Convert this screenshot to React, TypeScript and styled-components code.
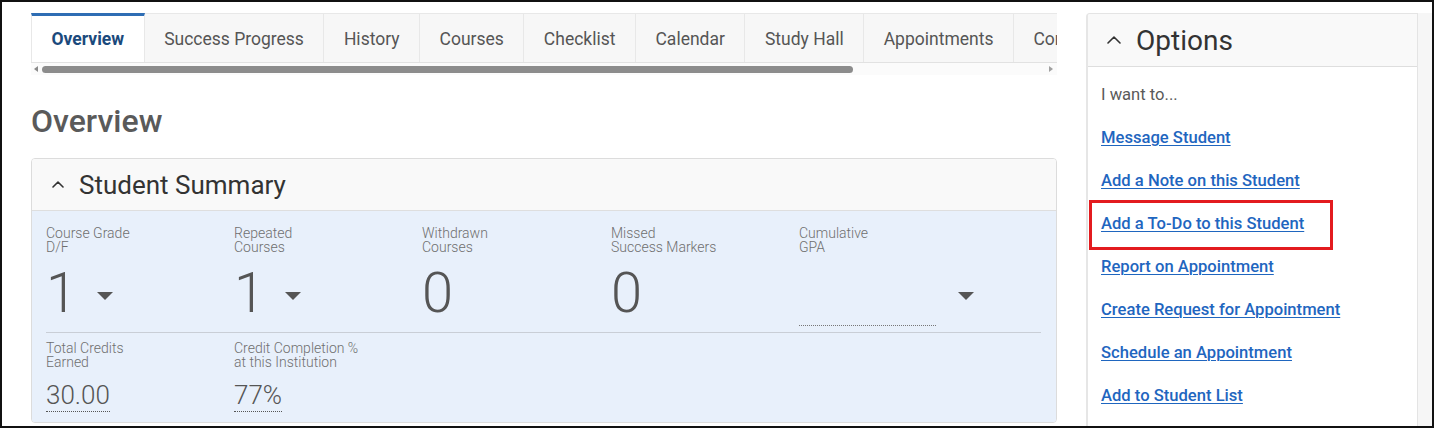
import React from "react";
import styled, { createGlobalStyle } from "styled-components";

const Global = createGlobalStyle`
  html, body { margin: 0; padding: 0; background: #ffffff; }
  body { font-family: Roboto, "Noto Sans", Arial, sans-serif; }
  * { box-sizing: border-box; }
`;

const Frame = styled.div`
  width: 1434px;
  height: 428px;
  border: 2px solid #111;
  overflow: hidden;
  display: flex;
  align-items: flex-start;
  padding: 11px 0 0 29px;
  background: #fff;
`;

const Main = styled.div`
  width: 1026px;
  flex-shrink: 0;
  display: flex;
  flex-direction: column;
`;

const TabStrip = styled.div`
  display: flex;
  height: 50px;
  overflow: hidden;
  border-bottom: 1px solid #e2e2e2;
`;

const Tab = styled.div<{ $active?: boolean }>`
  flex-shrink: 0;
  display: flex;
  align-items: center;
  padding: 0 19.5px;
  font-size: 17.5px;
  background: ${(p) => (p.$active ? "#ffffff" : "#f7f7f7")};
  color: ${(p) => (p.$active ? "#1b4a7c" : "#555555")};
  font-weight: ${(p) => (p.$active ? 700 : 400)};
  border-top: ${(p) => (p.$active ? "3px solid #2e6db4" : "1px solid #e8e8e8")};
  border-right: 1px solid #e8e8e8;
  border-left: ${(p) => (p.$active ? "1px solid #e8e8e8" : "none")};
  padding-top: ${(p) => (p.$active ? "0" : "2px")};
`;

const ScrollRow = styled.div`
  height: 12px;
  display: flex;
  align-items: center;
  padding: 0 4px 0 3px;
  background: #fbfbfb;
`;

const ArrowLeft = styled.div`
  width: 0;
  height: 0;
  border-top: 3px solid transparent;
  border-bottom: 3px solid transparent;
  border-right: 4px solid #8a8a8a;
`;

const ArrowRight = styled.div`
  width: 0;
  height: 0;
  margin-left: auto;
  border-top: 3px solid transparent;
  border-bottom: 3px solid transparent;
  border-left: 4px solid #a0a0a0;
`;

const Thumb = styled.div`
  width: 811px;
  height: 7px;
  margin-left: 4px;
  border-radius: 4px;
  background: #8c8c8c;
`;

const PageTitle = styled.h1`
  margin: 27px 0 18px;
  font-size: 32px;
  line-height: 38px;
  font-weight: 500;
  color: #5a5a5a;
`;

const Panel = styled.section`
  border: 1px solid #dcdcdc;
  border-radius: 4px;
  overflow: hidden;
`;

const PanelHeader = styled.div<{ $h: number; $size: number; $pad: number }>`
  height: ${(p) => p.$h}px;
  display: flex;
  align-items: center;
  gap: 15px;
  padding-left: ${(p) => p.$pad}px;
  background: #f9f9f9;
  border-bottom: 1px solid #dedede;
  font-size: ${(p) => p.$size}px;
  color: #333;
`;

const SummaryBody = styled.div`
  background: #e8f0fb;
  padding: 15px 15px 10px 14px;
`;

const StatRow = styled.div<{ $first?: boolean }>`
  display: grid;
  grid-template-columns: 188px 188px 189px 188px 1fr;
  padding: ${(p) => (p.$first ? "0 0 6px" : "8px 0 0")};
  border-bottom: ${(p) => (p.$first ? "1px solid #c9ced6" : "none")};
`;

const Stat = styled.div<{ $gap: number }>`
  display: flex;
  flex-direction: column;
  gap: ${(p) => p.$gap}px;
  align-items: flex-start;
`;

const Label = styled.div`
  font-size: 14px;
  line-height: 14px;
  font-weight: 300;
  color: #6f6f6f;
`;

const BigValueLine = styled.div`
  display: flex;
  align-items: flex-start;
`;

const BigNumber = styled.span`
  font-size: 56px;
  line-height: 56px;
  font-weight: 300;
  color: #555;
`;

const Caret = styled.span<{ $ml: number }>`
  width: 0;
  height: 0;
  margin: 27px 0 0 ${(p) => p.$ml}px;
  border-left: 8.5px solid transparent;
  border-right: 8.5px solid transparent;
  border-top: 8px solid #555;
`;

const EmptyValue = styled.span`
  width: 137px;
  height: 61px;
  border-bottom: 1px dotted #777;
`;

const SmallValue = styled.span`
  font-size: 26px;
  line-height: 30px;
  font-weight: 300;
  color: #555;
  padding-bottom: 1px;
  border-bottom: 1px dotted #555;
`;

const Side = styled.aside`
  width: 332px;
  flex-shrink: 0;
  margin-left: 29px;
  height: 430px;
  border: 1px solid #e4e4e4;
  border-left: 2px solid #e6e6e6;
  border-bottom: none;
  border-radius: 4px 0 0 0;
  background: #fff;
  overflow: hidden;
`;

const Strip = styled.div`
  flex: 1;
  height: 430px;
  background: #f6f6f6;
`;

const SideBody = styled.div`
  padding: 6px 0 0 13px;
  display: flex;
  flex-direction: column;
`;

const Row = styled.div<{ $hl?: boolean }>`
  position: relative;
  height: 43px;
  display: flex;
  align-items: center;
  font-size: 16.6px;

  ${(p) =>
    p.$hl &&
    `
    &::after {
      content: "";
      position: absolute;
      left: -12px;
      top: -2px;
      width: 238px;
      height: 44px;
      border: 3px solid #e31b1f;
      pointer-events: none;
    }
  `}
`;

const Intro = styled.span`
  color: #5a5a5a;
  font-weight: 400;
`;

const Link = styled.a`
  color: #1f66bf;
  font-weight: 500;
  text-decoration: underline;
  text-underline-offset: 2px;
  text-decoration-thickness: 1px;
  cursor: pointer;
`;

const Chevron = ({ w, h }: { w: number; h: number }) => (
  <svg width={w} height={h} viewBox={`0 0 ${w} ${h}`} fill="none">
    <polyline
      points={`1,${h - 1} ${w / 2},1 ${w - 1},${h - 1}`}
      stroke="#333"
      strokeWidth="1.6"
      strokeLinecap="round"
      strokeLinejoin="round"
    />
  </svg>
);

const tabs = [
  "Overview",
  "Success Progress",
  "History",
  "Courses",
  "Checklist",
  "Calendar",
  "Study Hall",
  "Appointments",
  "Conversations",
];

const links = [
  "Message Student",
  "Add a Note on this Student",
  "Add a To-Do to this Student",
  "Report on Appointment",
  "Create Request for Appointment",
  "Schedule an Appointment",
  "Add to Student List",
];

export default function App() {
  return (
    <>
      <Global />
      <Frame>
        <Main>
          <TabStrip>
            {tabs.map((t, i) => (
              <Tab key={t} $active={i === 0}>
                {t}
              </Tab>
            ))}
          </TabStrip>
          <ScrollRow>
            <ArrowLeft />
            <Thumb />
            <ArrowRight />
          </ScrollRow>
          <PageTitle>Overview</PageTitle>
          <Panel>
            <PanelHeader $h={52} $size={26} $pad={20}>
              <Chevron w={12} h={7} />
              Student Summary
            </PanelHeader>
            <SummaryBody>
              <StatRow $first>
                <Stat $gap={11}>
                  <Label>
                    Course Grade
                    <br />
                    D/F
                  </Label>
                  <BigValueLine>
                    <BigNumber>1</BigNumber>
                    <Caret $ml={20} />
                  </BigValueLine>
                </Stat>
                <Stat $gap={11}>
                  <Label>
                    Repeated
                    <br />
                    Courses
                  </Label>
                  <BigValueLine>
                    <BigNumber>1</BigNumber>
                    <Caret $ml={20} />
                  </BigValueLine>
                </Stat>
                <Stat $gap={11}>
                  <Label>
                    Withdrawn
                    <br />
                    Courses
                  </Label>
                  <BigValueLine>
                    <BigNumber>0</BigNumber>
                  </BigValueLine>
                </Stat>
                <Stat $gap={11}>
                  <Label>
                    Missed
                    <br />
                    Success Markers
                  </Label>
                  <BigValueLine>
                    <BigNumber>0</BigNumber>
                  </BigValueLine>
                </Stat>
                <Stat $gap={11}>
                  <Label>
                    Cumulative
                    <br />
                    GPA
                  </Label>
                  <BigValueLine>
                    <EmptyValue />
                    <Caret $ml={22} />
                  </BigValueLine>
                </Stat>
              </StatRow>
              <StatRow>
                <Stat $gap={11}>
                  <Label>
                    Total Credits
                    <br />
                    Earned
                  </Label>
                  <SmallValue>30.00</SmallValue>
                </Stat>
                <Stat $gap={11}>
                  <Label>
                    Credit Completion %
                    <br />
                    at this Institution
                  </Label>
                  <SmallValue>77%</SmallValue>
                </Stat>
              </StatRow>
            </SummaryBody>
          </Panel>
        </Main>
        <Side>
          <PanelHeader $h={53} $size={28} $pad={19}>
            <Chevron w={14} h={8} />
            Options
          </PanelHeader>
          <SideBody>
            <Row>
              <Intro>I want to...</Intro>
            </Row>
            {links.map((l, i) => (
              <Row key={l} $hl={i === 2}>
                <Link>{l}</Link>
              </Row>
            ))}
          </SideBody>
        </Side>
        <Strip />
      </Frame>
    </>
  );
}
